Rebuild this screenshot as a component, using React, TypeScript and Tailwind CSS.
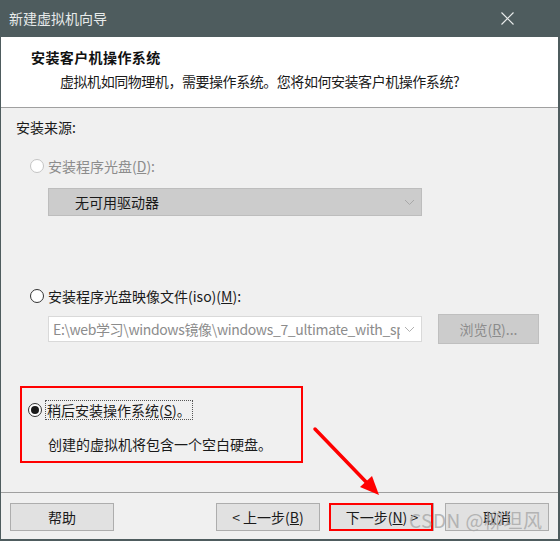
import React from 'react';

const font = { fontFamily: '"Microsoft YaHei", "Noto Sans CJK SC", "Noto Sans", sans-serif' };

const Radio = ({ checked = false, disabled = false }: { checked?: boolean; disabled?: boolean }) => (
  <span
    className={`flex h-[14px] w-[14px] shrink-0 items-center justify-center rounded-full border bg-white ${
      disabled ? 'border-[#c4c4c4]' : 'border-[#333333]'
    }`}
  >
    {checked && <span className="h-[8px] w-[8px] rounded-full bg-[#1a1a1a]" />}
  </span>
);

const Chevron = ({ color = '#a8a8a8' }: { color?: string }) => (
  <svg width="11" height="7" viewBox="0 0 11 7" fill="none">
    <path d="M1 1l4.5 4.5L10 1" stroke={color} strokeWidth="1" />
  </svg>
);

const Button = ({ children, className = '' }: { children: React.ReactNode; className?: string }) => (
  <div
    className={`flex h-[28px] w-[104px] items-center justify-center border border-[#adadad] bg-[#e1e1e1] text-[14px] text-[#1a1a1a] ${className}`}
  >
    {children}
  </div>
);

export default function App() {
  return (
    <div className="relative h-[541px] w-[560px] overflow-hidden" style={font}>
      <div className="flex h-full w-full flex-col border-b-2 border-l border-r-2 border-[#4e5c5e] bg-[#f0f0f0]">
        {/* title bar */}
        <div className="flex h-[37px] shrink-0 items-center justify-between bg-[#4e5c5e] pl-[8px] pr-[44px]">
          <span className="text-[14px] text-[#e8ebeb]">新建虚拟机向导</span>
          <svg width="13" height="13" viewBox="0 0 13 13">
            <path d="M0.5 0.5l12 12M12.5 0.5l-12 12" stroke="#e8ebeb" strokeWidth="1.2" />
          </svg>
        </div>

        {/* header */}
        <div className="h-[71px] shrink-0 border-b border-[#a0a0a0] bg-white pl-[30px] pt-[9px]">
          <div className="text-[14px] font-bold leading-[22px] tracking-[0.4px] text-[#111]">安装客户机操作系统</div>
          <div className="mt-[2px] pl-[29px] text-[14px] leading-[22px] tracking-[-0.45px] text-[#1a1a1a]">
            虚拟机如同物理机，需要操作系统。您将如何安装客户机操作系统?
          </div>
        </div>

        {/* body */}
        <div className="flex flex-1 flex-col pl-[15px] pt-[9px] text-[14px] text-[#1a1a1a]">
          <div className="leading-[20px]">安装来源:</div>

          <div className="ml-[14px] mt-[19px] flex items-center gap-[4px] leading-[20px] text-[#8c8c8c]">
            <Radio disabled />
            <span>
              安装程序光盘(<span className="underline">D</span>):
            </span>
          </div>
          <div className="ml-[32px] mt-[12px] flex h-[28px] w-[374px] items-center justify-between border border-[#bdbdbd] bg-[#cccccc] pl-[26px] pr-[6px]">
            <span>无可用驱动器</span>
            <Chevron />
          </div>

          <div className="ml-[14px] mt-[70px] flex items-center gap-[4px] leading-[20px]">
            <Radio />
            <span>
              安装程序光盘映像文件(iso)(<span className="underline">M</span>):
            </span>
          </div>
          <div className="ml-[32px] mt-[8px] flex items-center">
            <div className="flex h-[26px] w-[374px] items-center border border-[#d9d9d9] bg-white pl-[4px] pr-[6px]">
              <span className="w-[347px] overflow-hidden whitespace-nowrap tracking-[-0.35px] text-[#8c8c8c]">
                E:\web学习\windows镜像\windows_7_ultimate_with_sp1_x64_dvd
              </span>
              <span className="ml-auto">
                <Chevron color="#b0b0b0" />
              </span>
            </div>
            <div className="ml-[16px] flex h-[30px] w-[101px] items-center justify-center border border-[#bfbfbf] bg-[#cccccc] text-[#8c8c8c]">
              浏览(<span className="underline">R</span>)...
            </div>
          </div>

          <div className="ml-[4px] mt-[42px] h-[77px] w-[283px] border-2 border-[#ff0000] pl-[6px] pt-[12px]">
            <div className="flex items-center gap-[3px]">
              <Radio checked />
              <span className="border border-dotted border-[#555] px-[1px] leading-[18px]">
                稍后安装操作系统(<span className="underline">S</span>)。
              </span>
            </div>
            <div className="mt-[14px] pl-[20px] leading-[20px]">创建的虚拟机将包含一个空白硬盘。</div>
          </div>
        </div>

        {/* footer */}
        <div className="flex h-[47px] shrink-0 items-start border-t border-[#a0a0a0] pl-[9px] pt-[10px]">
          <Button>帮助</Button>
          <Button className="ml-[102px]">
            &lt; 上一步(<span className="underline">B</span>)
          </Button>
          <div className="relative ml-[10px]">
            <Button className="border-[#0078d7]">
              下一步(<span className="underline">N</span>) &gt;
            </Button>
            <div className="absolute -left-[1px] top-0 h-[28px] w-[104px] border-2 border-[#ff0000]" />
          </div>
          <Button className="ml-[11px]">取消</Button>
        </div>
      </div>

      {/* annotation arrow */}
      <svg className="absolute left-0 top-0" width="560" height="541" viewBox="0 0 560 541">
        <line x1="315" y1="429" x2="370" y2="486" stroke="#ff0000" strokeWidth="3.5" strokeLinecap="round" />
        <polygon points="379,495 360,487 372,476" fill="#ff0000" />
      </svg>

      {/* watermark */}
      <div className="absolute left-[409px] top-[508px] text-[19px] leading-[24px] tracking-[0.5px] text-[#a8a8a8] opacity-80">
        CSDN @柳坦风
      </div>
    </div>
  );
}
